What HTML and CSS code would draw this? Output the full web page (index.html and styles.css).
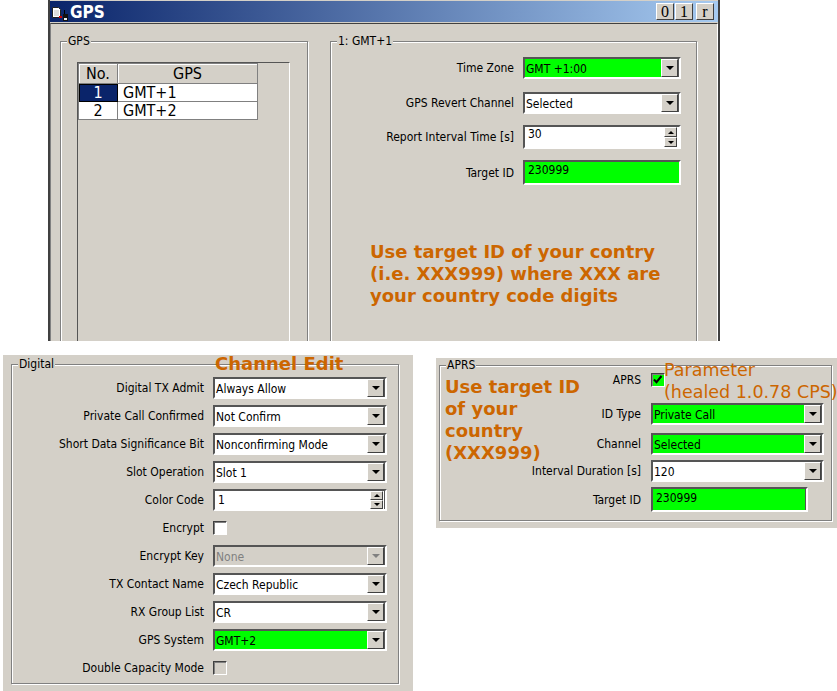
FILE: index.html
```html
<!DOCTYPE html>
<html lang="en">
<head>
<meta charset="utf-8">
<title>GPS</title>
<link rel="stylesheet" href="styles.css">
</head>
<body>
<section class="window">
  <header class="titlebar">
    <svg class="title-icon" width="18" height="21" viewBox="0 0 18 21">
      <path d="M1.500 6.500h6l2 2v8h-8z" fill="#fff" stroke="#222"/>
      <path d="M3 10h5M3 12h5M3 14h5" stroke="#bbb"/>
      <path d="M8 15h3v2H8z" fill="#c00"/>
      <path d="M13.500 9v4" stroke="#000"/>
      <rect x="12" y="13" width="5" height="7" fill="#111"/>
      <rect x="13" y="17" width="3" height="2" fill="#eee"/>
    </svg>
    <span class="title-text">GPS</span>
    <span class="title-buttons">
      <span class="title-btn">0</span><span class="title-btn">1</span><span class="title-btn title-btn-r">r</span>
    </span>
  </header>
  <div class="window-body">
    <div class="group group-list">
      <span class="legend">GPS</span>
      <div class="table-frame">
        <table class="grid">
          <tr><th class="col-no">No.</th><th class="col-name">GPS</th></tr>
          <tr><td class="cell-sel">1</td><td class="cell-name">GMT+1</td></tr>
          <tr><td class="cell-no">2</td><td class="cell-name">GMT+2</td></tr>
        </table>
      </div>
    </div>
    <div class="group group-form">
      <span class="legend">1: GMT+1</span>
      <div class="row row-a"><label class="lab">Time Zone</label><div class="field combo green"><span class="val">GMT +1:00</span><span class="drop"><i class="arrow"></i></span></div></div>
      <div class="row row-b"><label class="lab">GPS Revert Channel</label><div class="field combo"><span class="val">Selected</span><span class="drop"><i class="arrow"></i></span></div></div>
      <div class="row row-c"><label class="lab">Report Interval Time [s]</label><div class="field combo tall"><span class="val val-edit">30</span><span class="spin"><span class="spin-btn"><i class="arrow up"></i></span><span class="spin-btn"><i class="arrow"></i></span></span></div></div>
      <div class="row row-d"><label class="lab">Target ID</label><div class="field combo taller green"><span class="val val-edit">230999</span></div></div>
    </div>
  </div>
  <p class="note note-gps">Use target ID of your contry<br>(i.e. XXX999) where XXX are<br>your country code digits</p>
</section>

<section class="panel digital">
  <div class="group group-digital">
    <span class="legend">Digital</span>
    <div class="row d"><label class="lab">Digital TX Admit</label><div class="field combo"><span class="val">Always Allow</span><span class="drop"><i class="arrow"></i></span></div></div>
    <div class="row d"><label class="lab">Private Call Confirmed</label><div class="field combo"><span class="val">Not Confirm</span><span class="drop"><i class="arrow"></i></span></div></div>
    <div class="row d"><label class="lab">Short Data Significance Bit</label><div class="field combo"><span class="val">Nonconfirming Mode</span><span class="drop"><i class="arrow"></i></span></div></div>
    <div class="row d"><label class="lab">Slot Operation</label><div class="field combo"><span class="val">Slot 1</span><span class="drop"><i class="arrow"></i></span></div></div>
    <div class="row d"><label class="lab">Color Code</label><div class="field combo"><span class="val val-edit">1</span><span class="spin"><span class="spin-btn"><i class="arrow up"></i></span><span class="spin-btn"><i class="arrow"></i></span></span></div></div>
    <div class="row d"><label class="lab">Encrypt</label><span class="check"></span></div>
    <div class="row d"><label class="lab">Encrypt Key</label><div class="field combo disabled"><span class="val">None</span><span class="drop"><i class="arrow grey"></i></span></div></div>
    <div class="row d"><label class="lab">TX Contact Name</label><div class="field combo"><span class="val">Czech Republic</span><span class="drop"><i class="arrow"></i></span></div></div>
    <div class="row d"><label class="lab">RX Group List</label><div class="field combo"><span class="val">CR</span><span class="drop"><i class="arrow"></i></span></div></div>
    <div class="row d"><label class="lab">GPS System</label><div class="field combo green"><span class="val">GMT+2</span><span class="drop"><i class="arrow"></i></span></div></div>
    <div class="row d"><label class="lab">Double Capacity Mode</label><span class="check check-off"></span></div>
  </div>
  <p class="note note-channel">Channel Edit</p>
</section>

<section class="panel aprs">
  <div class="group group-aprs">
    <span class="legend">APRS</span>
    <div class="row p1"><label class="lab">APRS</label><span class="check check-on"><svg width="11" height="11" viewBox="0 0 11 11"><path d="M2 5.500l2.500 2.700L9.500 2" fill="none" stroke="#000" stroke-width="2"/></svg></span></div>
    <div class="row p2"><label class="lab">ID Type</label><div class="field combo green"><span class="val">Private Call</span><span class="drop"><i class="arrow"></i></span></div></div>
    <div class="row p3"><label class="lab">Channel</label><div class="field combo green"><span class="val">Selected</span><span class="drop"><i class="arrow"></i></span></div></div>
    <div class="row p4"><label class="lab">Interval Duration [s]</label><div class="field combo"><span class="val">120</span><span class="drop"><i class="arrow"></i></span></div></div>
    <div class="row p5"><label class="lab">Target ID</label><div class="field combo target green"><span class="val val-edit">230999</span></div></div>
  </div>
  <p class="note note-aprs">Use target ID<br>of your<br>country<br>(XXX999)</p>
  <p class="note-light">Parameter<br>(healed 1.0.78 CPS)</p>
</section>
</body>
</html>
```
FILE: styles.css
```css
* { box-sizing: border-box; }
html, body { margin: 0; padding: 0; background: #fff; }
body {
  position: relative;
  width: 837px;
  height: 691px;
  overflow: hidden;
  font-family: "DejaVu Sans", sans-serif;
  font-stretch: condensed;
  font-size: 12px;
  color: #000;
}

.window {
  position: absolute;
  left: 48px;
  top: 0;
  width: 672px;
  height: 341px;
  overflow: hidden;
  background: #d4d0c8;
  border-left: 2px solid #404040;
  border-right: 2px solid #404040;
  padding-top: 1px;
}
.titlebar {
  display: flex;
  align-items: center;
  height: 21px;
  padding-left: 1px;
  background: linear-gradient(90deg, #0a246a, #a6caf0);
  color: #fff;
}
.title-icon { flex: none; }
.title-text { margin-left: 1px; font-size: 17px; font-weight: 700; }
.title-buttons { display: flex; gap: 1px; margin-left: auto; margin-right: 4px; }
.title-btn {
  width: 18px;
  height: 17px;
  border: 1px solid;
  border-color: #fff #404040 #404040 #fff;
  background: #d4d0c8;
  color: #000;
  font: 16px/15px "Liberation Serif", serif;
  text-align: center;
}
.title-btn-r { margin-left: 2px; }
.window-body {
  display: flex;
  gap: 22px;
  height: 319px;
  margin-top: 1px;
  padding: 17px 0 0 9px;
  border-top: 1px solid #404040;
  border-left: 1px solid #808080;
  border-right: 1px solid #fff;
}

.group {
  position: relative;
  border: 1px solid #808080;
  box-shadow: inset 1px 1px 0 #fff, 1px 1px 0 #fff;
}
.legend {
  position: absolute;
  left: 6px;
  top: -8px;
  padding: 0 1px;
  background: #d4d0c8;
  line-height: 15px;
}
.group-list { width: 248px; height: 320px; padding: 20px 17px 0 16px; }
.group-form { width: 367px; height: 320px; padding-top: 16px; }

.table-frame {
  height: 300px;
  border: 1px solid;
  border-color: #555 #fff #fff #555;
}
.grid { border-collapse: collapse; table-layout: fixed; width: 180px; font-size: 16px; background: #fff; }
.grid th, .grid td { padding: 0; border: 1px solid #808080; font-weight: 400; line-height: 15px; }
.grid th { height: 20px; background: #d4d0c8; box-shadow: inset 1px 1px 0 #fff; }
.grid td { height: 18px; }
.col-no { width: 39px; }
.cell-sel { background: #0a246a; color: #fff; text-align: center; outline: 1px solid #000; outline-offset: -1px; }
.cell-no { text-align: center; }
.cell-name { padding-left: 5px !important; }

.row { display: flex; align-items: center; }
.lab { flex: none; text-align: right; white-space: nowrap; }
.group-form .lab { width: 183px; margin-right: 9px; }
.group-form .field { width: 158px; }
.row-a { margin-top: -1px; }
.row-b { margin-top: 13px; }
.row-c { margin-top: 11px; }
.row-d { margin-top: 11px; }

.field { display: flex; background: #fff; }
.combo {
  height: 22px;
  border: 2px solid;
  border-color: #555 #fff #fff #555;
  box-shadow: inset -1px 0 0 #555;
}
.tall { height: 24px; box-shadow: none; }
.taller { height: 25px; box-shadow: none; }
.green { background: #00ff00; }
.disabled { background: #d4d0c8; color: #808080; }
.val { flex: 1; padding-left: 1px; line-height: 20px; white-space: nowrap; }
.val-edit { padding-left: 3px; line-height: 15px; }
.taller .val-edit { line-height: 17px; }
.group-digital .val-edit { line-height: 19px; }
.group-aprs .target .val-edit { line-height: 19px; }
.drop {
  display: flex;
  flex: none;
  align-items: center;
  justify-content: center;
  width: 17px;
  margin-right: 1px;
  background: #d4d0c8;
  border: 1px solid;
  border-color: #fff #404040 #404040 #fff;
}
.arrow {
  display: block;
  width: 0;
  height: 0;
  border-left: 4px solid transparent;
  border-right: 4px solid transparent;
  border-top: 4px solid #000;
}
.arrow.up { border-top: 0; border-bottom: 3px solid #000; }
.arrow.grey { border-top-color: #808080; }
.spin { display: flex; flex: none; flex-direction: column; width: 13px; margin: 0 2px 0 0; }
.spin-btn {
  display: flex;
  flex: 1;
  align-items: center;
  justify-content: center;
  background: #d4d0c8;
  border: 1px solid;
  border-color: #fff #404040 #404040 #fff;
}
.spin-btn .arrow { border-left-width: 3px; border-right-width: 3px; border-top-width: 3px; }
.spin-btn .arrow.up { border-top-width: 0; border-bottom-width: 3px; }

.check {
  display: block;
  flex: none;
  width: 14px;
  height: 14px;
  border: 1px solid;
  border-color: #404040 #fff #fff #404040;
  background: #fff;
  box-shadow: inset 1px 1px 0 #808080;
}
.check-off { background: #d4d0c8; }
.check-on { background: #00ff00; line-height: 0; }

.panel { position: absolute; background: #d4d0c8; }
.digital { left: 3px; top: 355px; width: 410px; height: 336px; padding: 9px 0 0 8px; }
.group-digital { width: 388px; height: 320px; padding-top: 9px; }
.row.d { height: 28px; }
.group-digital .lab { width: 192px; margin-right: 9px; }
.group-digital .field { width: 174px; }

.aprs { left: 436px; top: 358px; width: 401px; height: 170px; padding: 7px 0 0 3px; }
.group-aprs { width: 393px; height: 156px; padding-top: 7px; }
.group-aprs .lab { width: 201px; margin-right: 10px; }
.group-aprs .field { width: 173px; }
.group-aprs .target { width: 157px; height: 25px; }
.p1 { height: 14px; }
.p2 { margin-top: 16px; }
.p3 { margin-top: 8px; }
.p4 { margin-top: 5px; }
.p5 { margin-top: 5px; }

.note {
  position: absolute;
  margin: 0;
  font-size: 18px;
  font-stretch: normal;
  font-weight: 700;
  line-height: 22px;
  color: #cc6600;
  white-space: nowrap;
}
.note-gps { left: 320px; top: 241px; }
.note-channel { left: 212px; top: -2px; }
.note-aprs { left: 9px; top: 18px; }
.note-light {
  position: absolute;
  left: 228px;
  top: 1px;
  margin: 0;
  font-size: 17.5px;
  font-stretch: normal;
  line-height: 22px;
  color: #cc6600;
  white-space: nowrap;
}
```
